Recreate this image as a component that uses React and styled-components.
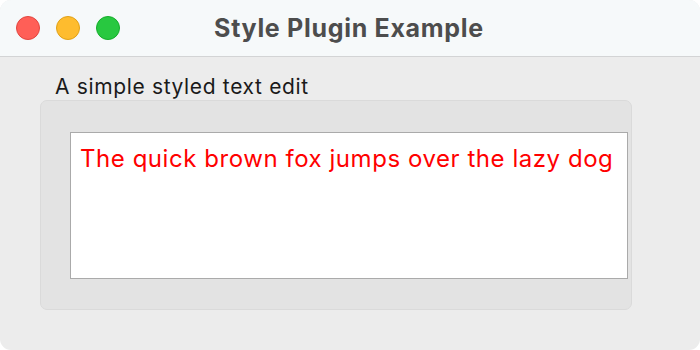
import React from "react";
import styled, { createGlobalStyle } from "styled-components";

const Global = createGlobalStyle`
  html, body {
    margin: 0;
    padding: 0;
    background: #ffffff;
  }
  * { box-sizing: border-box; }
`;

const Window = styled.div`
  width: 700px;
  height: 350px;
  border-radius: 11px;
  overflow: hidden;
  background: #ececec;
  display: flex;
  flex-direction: column;
  font-family: Inter, "Liberation Sans", Arial, sans-serif;
`;

const TitleBar = styled.div`
  height: 57px;
  flex: none;
  background: #f6f9fa;
  border-bottom: 1px solid #d3d4d5;
  position: relative;
  display: flex;
  align-items: center;
  justify-content: center;
`;

const Lights = styled.div`
  position: absolute;
  left: 16px;
  top: 16px;
  display: flex;
  gap: 16px;
`;

const Light = styled.span`
  width: 24px;
  height: 24px;
  border-radius: 50%;
  background: ${p => p.fill};
  border: 1px solid ${p => p.edge};
`;

const Title = styled.div`
  font-size: 25px;
  font-weight: bold;
  letter-spacing: 0.7px;
  color: #4d4d4d;
  margin-left: -2px;
`;

const Body = styled.div`
  flex: 1;
  padding: 15px 68px 40px 40px;
  display: flex;
  flex-direction: column;
`;

const Label = styled.div`
  font-size: 21px;
  letter-spacing: 0.65px;
  color: #1a1a1a;
  margin-left: 15px;
  height: 28px;
  line-height: 29px;
`;

const Group = styled.div`
  flex: 1;
  background: #e3e3e3;
  border: 1px solid #dadada;
  border-radius: 7px;
  padding: 31px 3px 30px 29px;
  display: flex;
`;

const Editor = styled.div`
  flex: 1;
  background: #ffffff;
  border: 1px solid #aaaaaa;
  padding: 11px 9px;
  color: #ff0000;
  font-size: 24px;
  letter-spacing: 0.55px;
`;

export default function App() {
  return (
    <>
      <Global />
      <Window>
        <TitleBar>
          <Lights>
            <Light fill="#ff5f57" edge="#e2463f" />
            <Light fill="#febc2e" edge="#e1a116" />
            <Light fill="#28c840" edge="#14ae2a" />
          </Lights>
          <Title>Style Plugin Example</Title>
        </TitleBar>
        <Body>
          <Label>A simple styled text edit</Label>
          <Group>
            <Editor>The quick brown fox jumps over the lazy dog</Editor>
          </Group>
        </Body>
      </Window>
    </>
  );
}
